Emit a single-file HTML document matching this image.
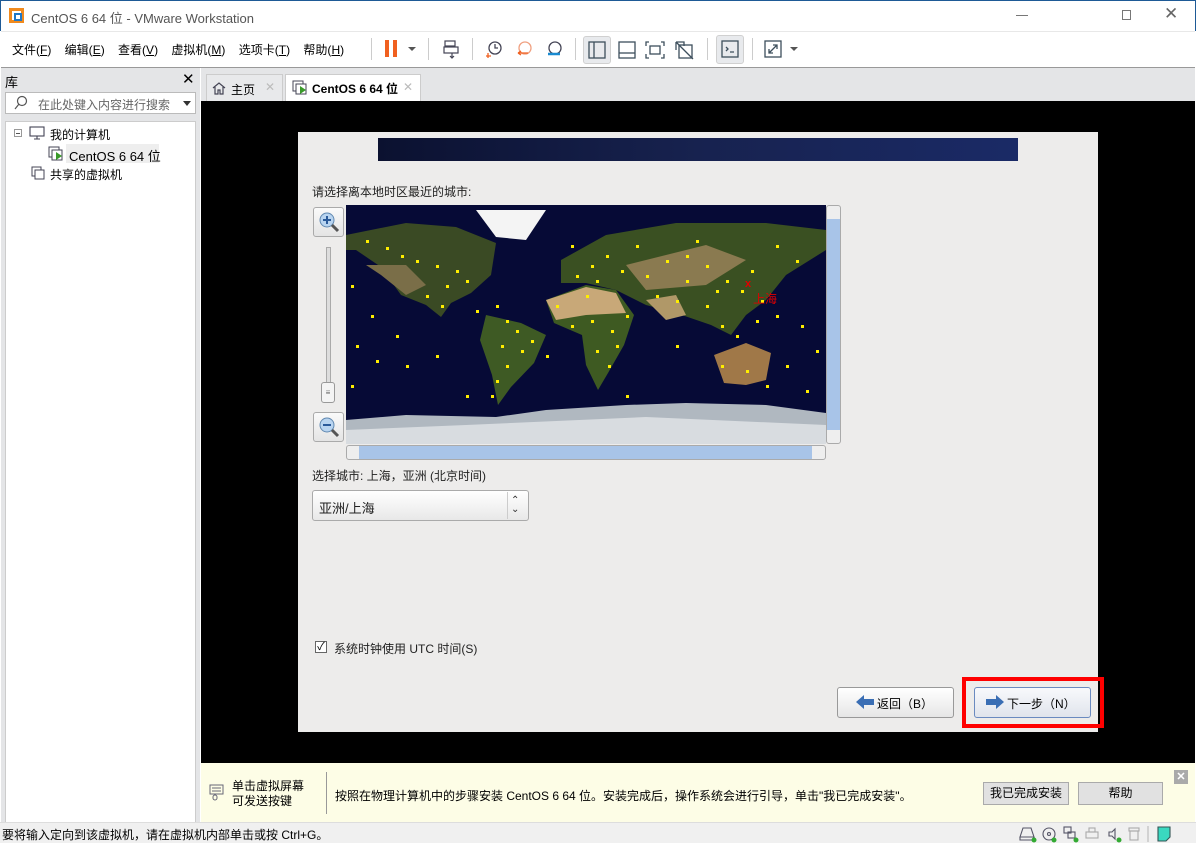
<!DOCTYPE html>
<html><head><meta charset="utf-8"><style>
*{margin:0;padding:0;box-sizing:border-box}
body{width:1196px;height:843px;overflow:hidden;background:#fff;font-family:"Liberation Sans","Microsoft YaHei","Noto Sans CJK SC",sans-serif;font-size:12px;color:#000;position:relative}
.a{position:absolute}
.t{white-space:nowrap}
</style></head><body>
<!-- title bar -->
<div class="a" style="left:0;top:0;width:1196px;height:31px;background:#fff;border-top:1px solid #1e5a96;border-left:1px solid #1e5a96;border-right:1px solid #1e5a96"></div>
<svg class="a" style="left:8px;top:7px" width="17" height="17"><rect x="1" y="1" width="15" height="15" fill="#f08a1e"/><rect x="4" y="4" width="9" height="9" fill="#fff"/><rect x="6" y="6" width="8" height="8" fill="#1f78c8"/><rect x="8" y="8" width="4" height="4" fill="#fff"/></svg>
<div class="a t" style="left:31px;top:8px;font-size:13px;color:#555">CentOS 6 64 位 - VMware Workstation</div>
<div class="a" style="left:1016px;top:15px;width:12px;height:1px;background:#777"></div>
<div class="a" style="left:1122px;top:10px;width:9px;height:10px;border:1px solid #777"></div>
<div class="a t" style="left:1164px;top:4px;font-size:17px;color:#666">✕</div>
<!-- menu -->
<div class="a" style="left:1px;top:31px;width:1194px;height:37px;border-top:1px solid #e8e8e8;border-bottom:1px solid #999;background:#fff"></div>
<div class="a t" style="left:12px;top:41px;font-size:12px">文件(<u>F</u>)&nbsp;&nbsp;&nbsp;&nbsp;编辑(<u>E</u>)&nbsp;&nbsp;&nbsp;&nbsp;查看(<u>V</u>)&nbsp;&nbsp;&nbsp;&nbsp;虚拟机(<u>M</u>)&nbsp;&nbsp;&nbsp;&nbsp;选项卡(<u>T</u>)&nbsp;&nbsp;&nbsp;&nbsp;帮助(<u>H</u>)</div>
<div class="a" style="left:371px;top:38px;width:1px;height:22px;background:#ccc"></div>
<div class="a" style="left:385px;top:40px;width:4px;height:17px;background:#f06020"></div>
<div class="a" style="left:393px;top:40px;width:4px;height:17px;background:#f06020"></div>
<div class="a" style="left:408px;top:47px;border:4px solid transparent;border-top:4px solid #555"></div>
<div class="a" style="left:428px;top:38px;width:1px;height:22px;background:#ccc"></div>
<svg class="a" style="left:442px;top:39px" width="20" height="20" fill="none" stroke="#445" stroke-width="1.2"><rect x="3" y="2" width="10" height="5"/><rect x="2" y="8" width="14" height="6"/><path d="M10 14v5M8 17l2 2 2-2"/></svg>
<div class="a" style="left:472px;top:38px;width:1px;height:22px;background:#ccc"></div>
<svg class="a" style="left:484px;top:39px" width="80" height="20" fill="none" stroke-width="1.3"><circle cx="11" cy="9" r="6" stroke="#445"/><path d="M11 5v4h3" stroke="#445"/><path d="M4 14v5M2 17h5" stroke="#f06020"/><circle cx="41" cy="9" r="6" stroke="#f0a080"/><path d="M34 14h10M34 14l3-2M34 14l3 2" stroke="#f06020"/><circle cx="71" cy="9" r="6" stroke="#445"/><path d="M64 15h12" stroke="#1a8ad0" stroke-width="2.5"/></svg>
<div class="a" style="left:575px;top:38px;width:1px;height:22px;background:#ccc"></div>
<div class="a" style="left:583px;top:36px;width:28px;height:28px;background:#e8eaed;border-radius:3px;border:1px solid #d0d0d0"></div>
<svg class="a" style="left:586px;top:39px" width="110" height="22" fill="none" stroke="#3d4f5c" stroke-width="1.3"><rect x="3" y="3" width="16" height="16"/><path d="M8 3v16"/><rect x="33" y="3" width="16" height="16"/><path d="M33 14h16"/><path d="M63 3h-3v4M75 3h3v4M63 19h-3v-4M75 19h3v-4"/><rect x="64" y="7" width="10" height="8"/><rect x="93" y="6" width="13" height="13"/><path d="M90 3h8v4M90 3v8M90 3l17 17"/></svg>
<div class="a" style="left:707px;top:38px;width:1px;height:22px;background:#ccc"></div>
<div class="a" style="left:716px;top:35px;width:28px;height:29px;background:#e8eaed;border-radius:3px;border:1px solid #d0d0d0"></div>
<svg class="a" style="left:720px;top:39px" width="22" height="22" fill="none" stroke="#3d4f5c" stroke-width="1.3"><rect x="2" y="2" width="16" height="16"/><path d="M6 8l2 2-2 2M10 13h4"/></svg>
<div class="a" style="left:752px;top:38px;width:1px;height:22px;background:#ccc"></div>
<svg class="a" style="left:763px;top:39px" width="22" height="22" fill="none" stroke="#3d4f5c" stroke-width="1.3"><rect x="2" y="2" width="16" height="16"/><path d="M6 14l8-8M10 6h4v4M6 10v4h4"/></svg>
<div class="a" style="left:790px;top:47px;border:4px solid transparent;border-top:4px solid #555"></div>
<!-- left panel -->
<div class="a" style="left:1px;top:68px;width:199px;height:754px;background:#e4e5e7"></div>
<div class="a t" style="left:5px;top:72px;font-size:13px">库</div>
<div class="a t" style="left:182px;top:70px;font-size:15px">✕</div>
<div class="a" style="left:5px;top:92px;width:191px;height:22px;background:#fff;border:1px solid #bbb"></div>
<svg class="a" style="left:14px;top:95px" width="14" height="15" fill="none" stroke="#555" stroke-width="1.2"><circle cx="8" cy="6" r="4.5"/><path d="M5 9l-4 5"/></svg>
<div class="a t" style="left:38px;top:96px;color:#666">在此处键入内容进行搜索</div>
<div class="a" style="left:183px;top:101px;border:4px solid transparent;border-top:5px solid #333"></div>
<div class="a" style="left:5px;top:121px;width:191px;height:701px;background:#fff;border:1px solid #ccc;border-bottom:none"></div>
<div class="a" style="left:14px;top:129px;width:8px;height:8px;border:1px solid #999"></div>
<div class="a" style="left:16px;top:133px;width:4px;height:1px;background:#555"></div>
<svg class="a" style="left:29px;top:126px" width="16" height="14" fill="none" stroke="#445" stroke-width="1.1"><rect x="1" y="1" width="14" height="9"/><path d="M5 13h6M8 10v3"/></svg>
<div class="a t" style="left:50px;top:126px">我的计算机</div>
<div class="a" style="left:66px;top:144px;width:93px;height:19px;background:#eee"></div>
<svg class="a" style="left:48px;top:146px" width="16" height="16" fill="none" stroke="#445" stroke-width="1"><rect x="1" y="1" width="10" height="10"/><rect x="4" y="4" width="10" height="10" fill="#fff"/><path d="M8 6v8l6-4z" fill="#3a9a2a" stroke="none"/></svg>
<div class="a t" style="left:69px;top:146px;font-size:13px">CentOS 6 64 位</div>
<svg class="a" style="left:31px;top:166px" width="14" height="14" fill="none" stroke="#445" stroke-width="1"><rect x="1" y="1" width="9" height="9"/><rect x="4" y="4" width="9" height="9" fill="#fff"/></svg>
<div class="a t" style="left:50px;top:166px">共享的虚拟机</div>
<!-- tabs -->
<div class="a" style="left:201px;top:68px;width:994px;height:33px;background:#e4e5e7"></div>
<div class="a" style="left:206px;top:74px;width:77px;height:27px;background:#e8e9eb;border:1px solid #ccc;border-bottom:none"></div>
<svg class="a" style="left:212px;top:81px" width="14" height="14" fill="none" stroke="#445" stroke-width="1.2"><path d="M1 7l6-5 6 5M3 6v7h3v-4h2v4h3V6"/></svg>
<div class="a t" style="left:231px;top:81px;font-size:12px">主页</div>
<div class="a t" style="left:265px;top:80px;color:#bbb;font-size:12px">✕</div>
<div class="a" style="left:285px;top:74px;width:136px;height:28px;background:#fff;border:1px solid #ccc;border-bottom:none"></div>
<svg class="a" style="left:292px;top:80px" width="16" height="16" fill="none" stroke="#445" stroke-width="1"><rect x="1" y="1" width="10" height="10"/><rect x="4" y="4" width="10" height="10" fill="#fff"/><path d="M8 6v8l6-4z" fill="#3a9a2a" stroke="none"/></svg>
<div class="a t" style="left:312px;top:80px;font-weight:bold;font-size:12px">CentOS 6 64 位</div>
<div class="a t" style="left:403px;top:80px;color:#bbb;font-size:12px">✕</div>
<!-- VM -->
<div class="a" style="left:201px;top:101px;width:994px;height:662px;background:#000"></div>
<div class="a" style="left:298px;top:132px;width:800px;height:600px;background:#edeceb"></div>
<div class="a" style="left:378px;top:138px;width:640px;height:23px;background:linear-gradient(90deg,#0b1130,#17224f 50%,#1a2a66)"></div>
<div class="a t" style="left:312px;top:183px;font-size:12px;color:#222">请选择离本地时区最近的城市:</div>
<!-- zoom controls -->
<div class="a" style="left:313px;top:207px;width:31px;height:30px;border:1px solid #aaa;border-radius:3px;background:linear-gradient(#fafafa,#e4e4e4)"></div>
<svg class="a" style="left:317px;top:211px" width="24" height="24"><circle cx="10" cy="9" r="7" fill="#b8d4f0" stroke="#6088b0"/><path d="M15 14l6 6" stroke="#555" stroke-width="3"/><path d="M6 9h8M10 5v8" stroke="#2a5a9a" stroke-width="2"/></svg>
<div class="a" style="left:326px;top:247px;width:5px;height:155px;border:1px solid #aaa;background:#ddd"></div>
<div class="a" style="left:321px;top:382px;width:14px;height:21px;border:1px solid #999;border-radius:3px;background:#f4f4f4;font-size:8px;text-align:center;line-height:19px;color:#666">≡</div>
<div class="a" style="left:313px;top:412px;width:31px;height:30px;border:1px solid #aaa;border-radius:3px;background:linear-gradient(#fafafa,#e4e4e4)"></div>
<svg class="a" style="left:317px;top:416px" width="24" height="24"><circle cx="10" cy="9" r="7" fill="#b8d4f0" stroke="#6088b0"/><path d="M15 14l6 6" stroke="#555" stroke-width="3"/><path d="M6 9h8" stroke="#2a5a9a" stroke-width="2"/></svg>
<!-- map -->
<svg class="a" style="left:346px;top:205px" width="480" height="239" viewBox="0 0 480 239">
<rect width="480" height="239" fill="#060a36"/>
<path d="M0 30L60 18L110 22L150 38L145 70L125 88L105 98L95 112L80 100L55 90L35 62L10 45L0 45Z" fill="#3a4a24"/>
<path d="M20 60L60 60L80 80L60 90L35 70Z" fill="#7a6e48"/>
<path d="M130 5L200 5L180 35L150 32Z" fill="#f4f4f4"/>
<path d="M140 110L175 118L200 130L188 158L165 182L152 200L146 170L134 135Z" fill="#3e5a24"/>
<path d="M200 95L240 80L270 85L288 110L278 140L262 168L252 185L240 160L236 130L208 118Z" fill="#3e5a22"/>
<path d="M200 95L240 82L270 88L280 108L240 110L210 115Z" fill="#c8a878"/>
<path d="M215 55L260 30L330 18L420 18L480 25L480 45L440 70L420 95L400 110L385 130L365 120L330 108L300 100L270 85L240 78L215 78Z" fill="#3a5022"/>
<path d="M280 60L360 40L400 55L360 80L300 85Z" fill="#8a7a50"/>
<path d="M300 95L330 90L340 110L320 115Z" fill="#b09868"/>
<path d="M368 150L400 138L425 148L420 175L400 180L378 178Z" fill="#a07848"/>
<path d="M0 215L60 210L150 212L200 205L280 200L340 198L420 200L480 208L480 239L0 239Z" fill="#b0b8c0"/>
<path d="M0 225L120 220L300 212L480 220L480 239L0 239Z" fill="#d8dce0"/>
<g fill="#ffee00">
<rect x="20" y="35" width="3" height="3"/><rect x="40" y="42" width="3" height="3"/><rect x="55" y="50" width="3" height="3"/><rect x="70" y="55" width="3" height="3"/><rect x="90" y="60" width="3" height="3"/><rect x="110" y="65" width="3" height="3"/><rect x="120" y="75" width="3" height="3"/><rect x="100" y="80" width="3" height="3"/><rect x="80" y="90" width="3" height="3"/><rect x="95" y="100" width="3" height="3"/><rect x="130" y="105" width="3" height="3"/><rect x="150" y="100" width="3" height="3"/><rect x="160" y="115" width="3" height="3"/><rect x="170" y="125" width="3" height="3"/><rect x="155" y="140" width="3" height="3"/><rect x="175" y="145" width="3" height="3"/><rect x="160" y="160" width="3" height="3"/><rect x="150" y="175" width="3" height="3"/><rect x="145" y="190" width="3" height="3"/><rect x="185" y="135" width="3" height="3"/><rect x="5" y="80" width="3" height="3"/><rect x="25" y="110" width="3" height="3"/><rect x="10" y="140" width="3" height="3"/><rect x="30" y="155" width="3" height="3"/><rect x="50" y="130" width="3" height="3"/><rect x="60" y="160" width="3" height="3"/><rect x="5" y="180" width="3" height="3"/><rect x="90" y="150" width="3" height="3"/><rect x="120" y="190" width="3" height="3"/><rect x="230" y="70" width="3" height="3"/><rect x="245" y="60" width="3" height="3"/><rect x="260" y="50" width="3" height="3"/><rect x="275" y="65" width="3" height="3"/><rect x="250" y="75" width="3" height="3"/><rect x="240" y="90" width="3" height="3"/><rect x="210" y="100" width="3" height="3"/><rect x="225" y="120" width="3" height="3"/><rect x="245" y="115" width="3" height="3"/><rect x="265" y="125" width="3" height="3"/><rect x="250" y="145" width="3" height="3"/><rect x="262" y="160" width="3" height="3"/><rect x="270" y="140" width="3" height="3"/><rect x="280" y="110" width="3" height="3"/><rect x="300" y="70" width="3" height="3"/><rect x="320" y="55" width="3" height="3"/><rect x="340" y="50" width="3" height="3"/><rect x="360" y="60" width="3" height="3"/><rect x="380" y="75" width="3" height="3"/><rect x="395" y="85" width="3" height="3"/><rect x="405" y="65" width="3" height="3"/><rect x="430" y="40" width="3" height="3"/><rect x="450" y="55" width="3" height="3"/><rect x="310" y="90" width="3" height="3"/><rect x="330" y="95" width="3" height="3"/><rect x="360" y="100" width="3" height="3"/><rect x="375" y="120" width="3" height="3"/><rect x="390" y="130" width="3" height="3"/><rect x="410" y="115" width="3" height="3"/><rect x="430" y="110" width="3" height="3"/><rect x="455" y="120" width="3" height="3"/><rect x="470" y="145" width="3" height="3"/><rect x="440" y="160" width="3" height="3"/><rect x="400" y="165" width="3" height="3"/><rect x="375" y="160" width="3" height="3"/><rect x="420" y="180" width="3" height="3"/><rect x="460" y="185" width="3" height="3"/><rect x="280" y="190" width="3" height="3"/><rect x="330" y="140" width="3" height="3"/><rect x="225" y="40" width="3" height="3"/><rect x="290" y="40" width="3" height="3"/><rect x="350" y="35" width="3" height="3"/><rect x="200" y="150" width="3" height="3"/><rect x="370" y="85" width="3" height="3"/><rect x="415" y="95" width="3" height="3"/><rect x="340" y="75" width="3" height="3"/>
</g>
<text x="399" y="82" fill="#e00000" font-size="11" font-weight="bold" font-family="Liberation Sans">x</text>
<text x="407" y="98" fill="#e00000" font-size="12" font-family="Liberation Sans,Noto Sans CJK SC,sans-serif">上海</text>
</svg>
<div class="a" style="left:826px;top:205px;width:15px;height:239px;border:1px solid #aaa;background:#eee;border-radius:3px"></div>
<div class="a" style="left:827px;top:219px;width:13px;height:211px;background:#a8c4e8"></div>
<div class="a" style="left:346px;top:445px;width:480px;height:15px;border:1px solid #aaa;background:#eee;border-radius:3px"></div>
<div class="a" style="left:359px;top:446px;width:453px;height:13px;background:#a8c4e8"></div>
<div class="a t" style="left:312px;top:467px;color:#222">选择城市: 上海，亚洲 (北京时间)</div>
<div class="a" style="left:312px;top:490px;width:217px;height:31px;border:1px solid #aaa;border-radius:3px;background:linear-gradient(#fff,#e8e8e8)"></div>
<div class="a" style="left:507px;top:492px;width:1px;height:27px;background:#ccc"></div>
<div class="a t" style="left:319px;top:498px;font-size:13px;color:#222">亚洲/上海</div>
<div class="a t" style="left:511px;top:496px;font-size:10px;color:#333;line-height:9px">⌃<br>⌄</div>
<div class="a" style="left:315px;top:641px;width:12px;height:12px;border:1px solid #666;background:#fff;font-size:11px;line-height:10px;text-align:center">✓</div>
<div class="a t" style="left:334px;top:640px;color:#222;font-size:12px">系统时钟使用 UTC 时间(S)</div>
<div class="a" style="left:837px;top:687px;width:117px;height:31px;border:1px solid #999;border-radius:3px;background:linear-gradient(#fff,#e6e6e6)"></div>
<svg class="a" style="left:855px;top:693px" width="20" height="18"><path d="M1 9l8-7v4h10v6H9v4z" fill="#3a6eb4"/></svg>
<div class="a t" style="left:877px;top:695px;font-size:12px">返回（B）</div>
<div class="a" style="left:962px;top:677px;width:142px;height:51px;border:4px solid #f00"></div>
<div class="a" style="left:974px;top:687px;width:117px;height:31px;border:1px solid #6a8ac0;border-radius:3px;background:linear-gradient(#f8f9fc,#e0e4ec)"></div>
<svg class="a" style="left:985px;top:693px" width="20" height="18"><path d="M19 9l-8-7v4H1v6h10v4z" fill="#3a6eb4"/></svg>
<div class="a t" style="left:1007px;top:695px;font-size:12px">下一步（N）</div>
<!-- hint bar -->
<div class="a" style="left:201px;top:763px;width:994px;height:59px;background:#fdfde6"></div>
<svg class="a" style="left:209px;top:784px" width="16" height="18" fill="none" stroke="#667" stroke-width="1"><rect x="1" y="1" width="13" height="9"/><path d="M3 4h9M3 7h9"/><rect x="4" y="11" width="4" height="5" rx="2"/></svg>
<div class="a" style="left:232px;top:779px;font-size:12px;line-height:15px">单击虚拟屏幕<br>可发送按键</div>
<div class="a" style="left:326px;top:772px;width:1px;height:42px;background:#999"></div>
<div class="a t" style="left:335px;top:787px;font-size:12px">按照在物理计算机中的步骤安装 CentOS 6 64 位。安装完成后，操作系统会进行引导，单击"我已完成安装"。</div>
<div class="a" style="left:983px;top:782px;width:86px;height:23px;border:1px solid #aaa;background:#e1e1e1;text-align:center;line-height:21px">我已完成安装</div>
<div class="a" style="left:1078px;top:782px;width:85px;height:23px;border:1px solid #aaa;background:#e1e1e1;text-align:center;line-height:21px">帮助</div>
<div class="a" style="left:1174px;top:770px;width:14px;height:14px;background:#aaa;color:#fff;font-size:11px;text-align:center;line-height:14px;font-weight:bold">✕</div>
<!-- status bar -->
<div class="a" style="left:0;top:822px;width:1196px;height:21px;background:#f0f0f0;border-top:1px solid #ddd"></div>
<div class="a t" style="left:2px;top:826px;font-size:12px">要将输入定向到该虚拟机，请在虚拟机内部单击或按 Ctrl+G。</div>
<svg class="a" style="left:1018px;top:825px" width="178" height="18" fill="none" stroke="#556" stroke-width="1.1"><path d="M2 12l3-9h8l3 9zM2 12v3h14v-3"/><circle cx="16" cy="15" r="2.5" fill="#3a3" stroke="none"/><circle cx="31" cy="9" r="6"/><circle cx="31" cy="9" r="1.5"/><circle cx="36" cy="15" r="2.5" fill="#3a3" stroke="none"/><rect x="46" y="2" width="7" height="6"/><rect x="50" y="7" width="7" height="6"/><circle cx="58" cy="15" r="2.5" fill="#3a3" stroke="none"/><rect x="68" y="7" width="12" height="6" stroke="#aaa"/><rect x="71" y="3" width="6" height="4" stroke="#aaa"/><path d="M91 7h3l3-3v10l-3-3h-3z"/><circle cx="101" cy="15" r="2.5" fill="#3a3" stroke="none"/><rect x="111" y="3" width="10" height="3" stroke="#aaa"/><rect x="112" y="6" width="8" height="9" stroke="#aaa"/><path d="M130 1v16" stroke="#bbb"/><path d="M140 2h12v10l-4 4h-8z" fill="#3ad8c0" stroke="#355"/></svg>
</body></html>
